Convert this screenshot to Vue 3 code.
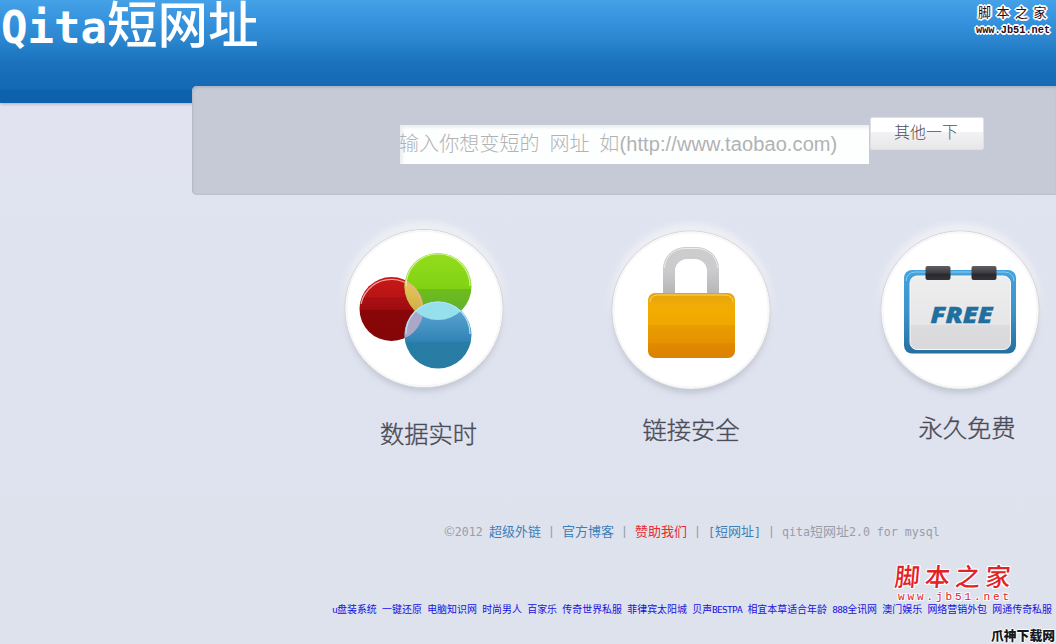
<script setup>
import { ref } from 'vue';

const url = ref('');

const friendLinks = [
  { latin: 'u', label: '盘装系统' },
  { label: '一键还原' },
  { label: '电脑知识网' },
  { label: '时尚男人' },
  { label: '百家乐' },
  { label: '传奇世界私服' },
  { label: '菲律宾太阳城' },
  { label: '贝声', tail: 'BESTPA' },
  { label: '相宜本草适合年龄' },
  { latin: '888', label: '全讯网' },
  { label: '澳门娱乐' },
  { label: '网络营销外包' },
  { label: '网通传奇私服' }
];
</script>

<template>
  <div class="page">
    <header class="header">
      <h1><span class="latin">Qita</span>短网址</h1>
      <div class="stamp">
        <div class="stamp-name">脚本之家</div>
        <div class="stamp-url">www.Jb51.net</div>
      </div>
    </header>

    <form class="search" @submit.prevent>
      <input v-model="url" type="text" placeholder="输入你想变短的&nbsp; 网址&nbsp; 如(http://www.taobao.com)" />
      <button type="submit">其他一下</button>
    </form>

    <main class="features">
      <section class="feature">
        <svg width="180" height="190" viewBox="0 0 180 190">
          <defs>
            <linearGradient id="red" x2="0" y2="1">
              <stop offset="0" stop-color="#c91818" /><stop offset=".32" stop-color="#b81416" />
              <stop offset=".32" stop-color="#aa1014" /><stop offset=".51" stop-color="#9f0c10" />
              <stop offset=".51" stop-color="#890608" /><stop offset="1" stop-color="#850608" />
            </linearGradient>
            <linearGradient id="green" x2="0" y2="1">
              <stop offset="0" stop-color="#93dc1c" /><stop offset=".53" stop-color="#82d214" />
              <stop offset=".53" stop-color="#6fbc1c" /><stop offset="1" stop-color="#5cae34" />
            </linearGradient>
            <linearGradient id="blue" x2="0" y2="1">
              <stop offset="0" stop-color="#62acd8" /><stop offset=".35" stop-color="#4795c4" />
              <stop offset=".6" stop-color="#2f83b4" /><stop offset=".6" stop-color="#277da6" />
              <stop offset="1" stop-color="#287ba3" />
            </linearGradient>
            <linearGradient id="yellow" x2="0" y2="1">
              <stop offset="0" stop-color="#d9a84a" /><stop offset=".5" stop-color="#e0c458" />
              <stop offset="1" stop-color="#cda63a" />
            </linearGradient>
            <clipPath id="greenClip"><circle cx="104" cy="68.500" r="33.500" /></clipPath>
            <clipPath id="redClip"><circle cx="57.500" cy="91" r="32" /></clipPath>
            <filter id="soft" x="-20%" y="-20%" width="140%" height="140%">
              <feGaussianBlur stdDeviation="3" />
            </filter>
          </defs>
          <circle cx="90" cy="84" r="81" fill="#f1f2f5" opacity=".8" filter="url(#soft)" />
          <circle cx="90" cy="95" r="78" fill="#b4bac8" opacity=".75" filter="url(#soft)" />
          <circle cx="90" cy="90.500" r="79" fill="#fff" stroke="#d3d4d8" />
          <circle cx="90" cy="90.500" r="77.500" fill="none" stroke="#f7f7f7" stroke-width="2" />
          <circle cx="57.500" cy="91" r="32" fill="url(#red)" />
          <circle cx="104" cy="68.500" r="33.500" fill="url(#green)" />
          <circle cx="104" cy="68.500" r="33.500" fill="url(#yellow)" clip-path="url(#redClip)" />
          <circle cx="104" cy="117" r="33.500" fill="url(#blue)" />
          <circle cx="104" cy="117" r="33.500" fill="#aaa8c6" clip-path="url(#redClip)" />
          <circle cx="104" cy="117" r="33.500" fill="#95e0ec" clip-path="url(#greenClip)" />
          <path d="M27 86a31 31 0 0 1 61 2" fill="none" stroke="#f2aaa0" stroke-width="1.200" />
          <path d="M72 68a32 32 0 0 1 64 0" fill="none" stroke="#d3f59a" stroke-width="1.200" />
          <path d="M72 116a32 32 0 0 1 64 0" fill="none" stroke="#b7e4f3" stroke-width="1.200" />
        </svg>
        <h2>数据实时</h2>
      </section>

      <section class="feature safe">
        <svg width="180" height="190" viewBox="0 0 180 190">
          <defs>
            <linearGradient id="gold" x2="0" y2="1">
              <stop offset="0" stop-color="#e7a30b" /><stop offset=".18" stop-color="#eeab08" />
              <stop offset=".18" stop-color="#f3ac00" /><stop offset=".49" stop-color="#f0a800" />
              <stop offset=".49" stop-color="#e99d00" /><stop offset=".77" stop-color="#e69200" />
              <stop offset=".77" stop-color="#e28a00" /><stop offset="1" stop-color="#db8000" />
            </linearGradient>
            <linearGradient id="steel" x2="0" y2="1">
              <stop offset="0" stop-color="#cdcdcf" /><stop offset=".5" stop-color="#cbcbce" />
              <stop offset="1" stop-color="#b4b4b7" />
            </linearGradient>
          </defs>
          <circle cx="90" cy="84" r="81" fill="#f1f2f5" opacity=".8" filter="url(#soft)" />
          <circle cx="90" cy="95" r="78" fill="#b4bac8" opacity=".75" filter="url(#soft)" />
          <circle cx="90" cy="90" r="79" fill="#fff" stroke="#d3d4d8" />
          <circle cx="90" cy="90" r="77.500" fill="none" stroke="#f7f7f7" stroke-width="2" />
          <path d="M62 75V49a22 22 0 0 1 22 -22h12a22 22 0 0 1 22 22v26h-12V51a12 12 0 0 0 -12 -12h-8a12 12 0 0 0 -12 12v24z" fill="url(#steel)" />
          <path d="M63.500 48a20.500 20 0 0 1 20.500 -19.500h12a20.500 20 0 0 1 20.500 19.500" fill="none" stroke="#ebebeb" />
          <rect x="47" y="73" width="87" height="65" rx="7" fill="url(#gold)" />
          <path d="M49 82a7 7 0 0 1 7 -7h69a7 7 0 0 1 7 7" fill="none" stroke="#f9d66d" />
        </svg>
        <h2>链接安全</h2>
      </section>

      <section class="feature free">
        <svg width="180" height="190" viewBox="0 0 180 190">
          <defs>
            <linearGradient id="frame" x2="0" y2="1">
              <stop offset="0" stop-color="#44a2df" /><stop offset=".5" stop-color="#3c93ca" />
              <stop offset="1" stop-color="#256f9f" />
            </linearGradient>
            <linearGradient id="sheet" x2="0" y2="1">
              <stop offset="0" stop-color="#eeeeef" /><stop offset=".67" stop-color="#e6e6e8" />
              <stop offset=".67" stop-color="#dcdcde" /><stop offset="1" stop-color="#d9d9db" />
            </linearGradient>
            <linearGradient id="clip" x2="0" y2="1">
              <stop offset="0" stop-color="#625f65" /><stop offset=".5" stop-color="#3d3c42" />
              <stop offset=".6" stop-color="#29282d" /><stop offset="1" stop-color="#35343a" />
            </linearGradient>
          </defs>
          <circle cx="90" cy="84" r="81" fill="#f1f2f5" opacity=".8" filter="url(#soft)" />
          <circle cx="90" cy="95" r="78" fill="#b4bac8" opacity=".75" filter="url(#soft)" />
          <circle cx="90" cy="90" r="79" fill="#fff" stroke="#d3d4d8" />
          <circle cx="90" cy="90" r="77.500" fill="none" stroke="#f7f7f7" stroke-width="2" />
          <rect x="34" y="50" width="112" height="83.500" rx="8" fill="url(#frame)" />
          <path d="M36 61a9 9 0 0 1 9 -9h90a9 9 0 0 1 9 9" fill="none" stroke="#8bcdf0" />
          <rect x="40" y="56" width="100.500" height="73.500" rx="7" fill="url(#sheet)" stroke="#f8f8f8" />
          <rect x="55.500" y="46" width="25" height="14" rx="2" fill="url(#clip)" />
          <rect x="101.500" y="46" width="25" height="14" rx="2" fill="url(#clip)" />
          <text x="60.500" y="103" textLength="62" lengthAdjust="spacingAndGlyphs" class="free-text">FREE</text>
        </svg>
        <h2>永久免费</h2>
      </section>
    </main>

    <footer class="footer">
      <p class="copyright">
        <span class="year">©<b>2012</b></span>
        <a href="#">超级外链</a><i>|</i>
        <a href="#">官方博客</a><i>|</i>
        <a href="#" class="sponsor">赞助我们</a><i>|</i>
        <a href="#" class="short"><b>[</b>短网址<b>]</b></a><i>|</i>
        <span class="version"><b>qita</b>短网址<b>2.0 for mysql</b></span>
      </p>
      <nav class="friends">
        <a v-for="link in friendLinks" :key="link.label" href="#"><b v-if="link.latin">{{ link.latin }}</b>{{ link.label }}<b v-if="link.tail">{{ link.tail }}</b></a>
      </nav>
    </footer>

    <div class="red-stamp">
      <div class="red-name">脚本之家</div>
      <div class="red-url">www.jb51.net</div>
    </div>
    <div class="corner">爪神下载网</div>
  </div>
</template>

<style>
body {
  margin: 0;
  overflow: hidden;
}
</style>

<style scoped>
.page {
  position: relative;
  width: 1056px;
  height: 644px;
  overflow: hidden;
  background: linear-gradient(#e1e3f0, #dfe3ef 50%, #dee2ed);
  font-family: "Liberation Sans", "Noto Sans CJK SC", sans-serif;
}

.header {
  display: flex;
  justify-content: space-between;
  height: 103px;
  background: linear-gradient(#45a2e8 0, #3794de 18px, #2c86cf 40px, #217bc4 52px, #1b72bc 62px, #186db7 74px, #136ab4 88px, #0e62ac 91px, #0d60a9 103px);
  box-shadow: 0 1px 3px #a5acc5;
}

h1 {
  margin: 0;
  height: 52px;
  padding-left: 1px;
  line-height: 42px;
  font-family: "Noto Sans CJK SC", sans-serif;
  font-size: 50.500px;
  font-weight: 500;
  color: #fff;
  white-space: nowrap;
}

.latin {
  font-family: "DejaVu Sans Mono", monospace;
  font-size: 44px;
  font-weight: 700;
  letter-spacing: 0;
}

.stamp {
  width: 80px;
  padding-top: 4px;
  color: #2a0a14;
  text-shadow: 1px 0 #fff, -1px 0 #fff, 0 1px #fff, 0 -1px #fff, 1px 1px #fff, -1px -1px #fff, 1px -1px #fff, -1px 1px #fff, 2px 0 #fff, -2px 0 #fff, 0 2px #fff, 0 -2px #fff;
  white-space: nowrap;
}

.stamp-name {
  padding-left: 2px;
  font-size: 13px;
  line-height: 18px;
  letter-spacing: 5.500px;
}

.stamp-url {
  font: 700 10.300px/17px "Liberation Mono", monospace;
}

.search {
  position: relative;
  display: flex;
  align-items: flex-start;
  box-sizing: border-box;
  height: 109px;
  margin: -17px 0 0 192px;
  padding: 31px 0 0 208px;
  background: #c6c9d6;
  border-radius: 5px 0 0 5px;
  box-shadow: inset 1px 2px 2px #b2b6c5, inset 0 -1px 1px #bbbfcd;
}

input {
  box-sizing: border-box;
  width: 469px;
  height: 39px;
  margin-top: 8px;
  padding: 0;
  border: 0;
  border-radius: 0;
  background: #fdfefe;
  box-shadow: inset 3px 3px 3px #edf0f3;
  font-family: "Liberation Sans", "Noto Sans CJK SC", sans-serif;
  font-size: 20px;
  font-weight: 300;
  letter-spacing: .1px;
  word-spacing: -.8px;
  text-indent: -1px;
  outline: none;
}

input::placeholder {
  color: #b2b2b4;
  opacity: 1;
}

button {
  width: 114px;
  height: 33px;
  margin-left: 1px;
  padding: 0 2px 5px 0;
  border: 1px solid #e0e0e3;
  border-radius: 2px;
  background: linear-gradient(#fff 45%, #f2f2f4 46%, #e7e7e9);
  color: #505056;
  font-family: "Noto Sans CJK SC", sans-serif;
  font-size: 16px;
  font-weight: 300;
}

.features {
  display: flex;
  height: 301px;
  padding: 23px 0 0 334px;
  box-sizing: border-box;
}

.feature {
  width: 180px;
}

.feature svg {
  display: block;
}

.safe {
  margin: 2px 0 0 87px;
}

.free {
  margin: 2px 0 0 89px;
}

h2 {
  margin: 7px 0 0 9px;
  color: #4a4c59;
  font: 300 24.300px/36px "Noto Sans CJK SC", sans-serif;
  text-align: center;
  text-shadow: 0 1px #f6f6fa;
  -webkit-text-stroke: .4px #4a4c59;
}

.safe h2 {
  margin: 1px 0 0;
}

.free h2 {
  margin: -1px 0 0 14px;
}

.free-text {
  fill: #206f9f;
  font: italic 900 22px "Noto Sans", "Liberation Sans", sans-serif;
  stroke: #206f9f;
  stroke-width: .4px;
}

.footer {
  padding-top: 25px;
  font-family: "Noto Sans CJK SC", sans-serif;
}

.footer b {
  font-family: "DejaVu Sans Mono", monospace;
  font-weight: 400;
}

.copyright {
  display: flex;
  height: 20px;
  margin: 0 0 0 444px;
  color: #9a9ca7;
  font-size: 13px;
  line-height: 20px;
  white-space: nowrap;
}

.copyright b {
  font-size: 11.600px;
}

.copyright a {
  width: 52px;
  color: #3d80b8;
  text-decoration: none;
}

.copyright .sponsor {
  color: #e92a32;
}

.copyright i {
  width: 21px;
  font-family: "Liberation Sans", sans-serif;
  font-style: normal;
  text-align: center;
}

.copyright .short {
  width: 53px;
}

.year {
  width: 45px;
}

.friends {
  display: flex;
  gap: 5.300px;
  margin: 58px 0 0 332px;
  font-size: 9.950px;
  line-height: 20px;
  white-space: nowrap;
}

.friends a {
  color: #1710e0;
  text-decoration: none;
}

.friends b {
  font-size: 9.500px;
  letter-spacing: -.72px;
}

.red-stamp {
  position: absolute;
  top: 558px;
  left: 895px;
  color: #e32228;
  text-shadow: 1px 1px #fff, -1px -1px #fff, 1px -1px #fff, -1px 1px #fff;
  white-space: nowrap;
}

.red-name {
  font: 500 25px/34px "Noto Sans CJK SC", sans-serif;
  letter-spacing: 5.200px;
  transform: skewX(-5deg);
}

.red-url {
  padding-left: 3px;
  font: 11px/10px "Liberation Mono", monospace;
  letter-spacing: 2.900px;
}

.corner {
  position: absolute;
  top: 626px;
  left: 991px;
  color: #17181b;
  font: 900 12.800px/18px "Noto Sans CJK SC", sans-serif;
  text-shadow: 1px 0 #fff, -1px 0 #fff, 0 1px #fff, 0 -1px #fff;
  white-space: nowrap;
}
</style>
